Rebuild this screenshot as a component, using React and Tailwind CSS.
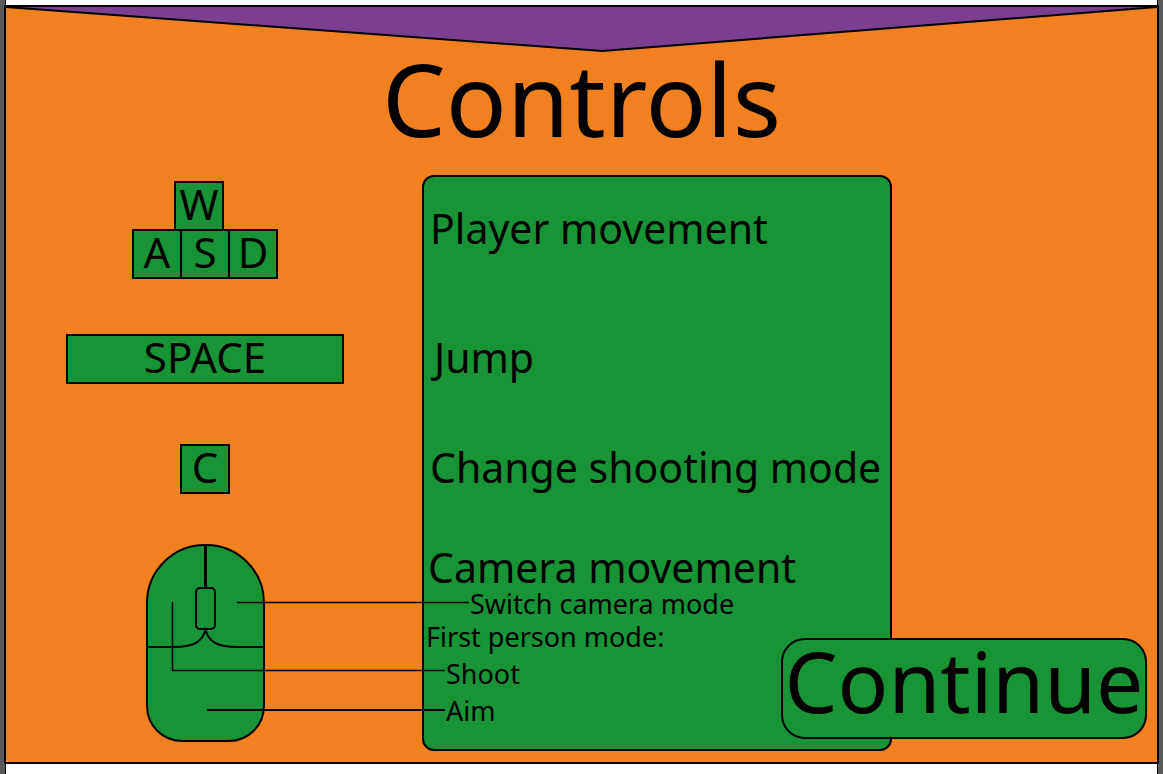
function Key({ children, className = "w-[50px]" }) {
  return (
    <kbd
      className={`flex h-[50px] shrink-0 justify-center border-2 border-black bg-[#189437] font-[inherit] text-[42px] leading-[42px] ${className}`}
    >
      {children}
    </kbd>
  );
}

function Banner() {
  return (
    <svg
      className="block h-11 w-full overflow-visible"
      viewBox="0 0 1000 44"
      preserveAspectRatio="none"
      aria-hidden="true"
    >
      <polygon points="0,0 518,44 1000,0" fill="#7b3e90" />
      <polyline
        points="0,0 518,44 1000,0"
        fill="none"
        stroke="#000"
        strokeWidth="2"
        vectorEffect="non-scaling-stroke"
      />
    </svg>
  );
}

function MouseDiagram() {
  return (
    <svg
      className="z-10 col-span-2 col-start-1 row-start-4 block h-[207px] w-[463px]"
      viewBox="0 0 463 207"
      fill="none"
      stroke="#000"
      strokeWidth="2"
      role="img"
      aria-label="Mouse buttons"
    >
      <path
        d="M141 59 A58 58 0 0 1 199 1 H200 A58 58 0 0 1 258 59 V162 A35 35 0 0 1 223 197 H176 A35 35 0 0 1 141 162 Z"
        fill="#189437"
      />
      <path d="M199.500 1 V44" strokeWidth="3" />
      <rect x="190" y="44" width="19" height="41" rx="4" />
      <path d="M141 103 H167 C188 103 196 98 199.500 86 C203 98 211 103 232 103 H258" />
      <path d="M231 58.500 H463" strokeWidth="1.600" />
      <path d="M166.500 58 V126.500 H439" strokeWidth="1.600" />
      <path d="M201 166 H439" />
    </svg>
  );
}

function Edge({ className }) {
  return <div className={`mx-px border-x border-black bg-white ${className}`} />;
}

export default function App() {
  return (
    <div className="flex min-h-screen flex-col bg-[#5b5a5b] px-1 font-['Noto_Sans',sans-serif] text-black">
      <Edge className="h-[5px]" />
      <main className="relative flex flex-1 flex-col border-2 border-black bg-[#f08020]">
        <Banner />
        <h1 className="text-center text-[101px] leading-[94px]">Controls</h1>

        <section className="mt-[30px] grid grid-cols-[416px_470px] grid-rows-[159px_110px_100px_207px]">
          <div className="col-start-2 row-span-4 row-start-1 rounded-xl border-2 border-black bg-[#189437]" />

          <div className="col-start-1 row-start-1 flex flex-col items-center pt-1.5 pr-[18px]">
            <div className="mr-3">
              <Key>W</Key>
            </div>
            <div className="-mt-0.5 flex">
              <Key>A</Key>
              <Key className="-ml-0.5 w-[50px]">S</Key>
              <Key className="-ml-0.5 w-[50px]">D</Key>
            </div>
          </div>
          <p className="col-start-2 row-start-1 pt-[30px] pl-2 text-[41px] leading-[46px]">
            Player movement
          </p>

          <div className="col-start-1 row-start-2 flex justify-center pr-[18px]">
            <Key className="w-[278px]">SPACE</Key>
          </div>
          <p className="col-start-2 row-start-2 pl-3 text-[41px] leading-[46px]">Jump</p>

          <div className="col-start-1 row-start-3 flex justify-center pr-[18px]">
            <Key>C</Key>
          </div>
          <p className="col-start-2 row-start-3 pl-2 text-[41px] leading-[46px] whitespace-nowrap">
            Change shooting mode
          </p>

          <MouseDiagram />
          <div className="col-start-2 row-start-4 text-[27px] leading-[37px]">
            <p className="pl-1.5 text-[41px] leading-[46px]">Camera movement</p>
            <p className="pl-12 leading-[28px]">Switch camera mode</p>
            <p className="pl-1">First person mode:</p>
            <p className="pl-6">Shoot</p>
            <p className="pl-6">Aim</p>
          </div>
        </section>

        <button
          type="button"
          className="absolute right-2.5 bottom-[23px] z-20 flex h-[101px] w-[366px] items-start justify-center rounded-3xl border-2 border-black bg-[#189437] text-[84px] leading-[81px]"
        >
          Continue
        </button>
      </main>
      <Edge className="h-2.5" />
    </div>
  );
}
